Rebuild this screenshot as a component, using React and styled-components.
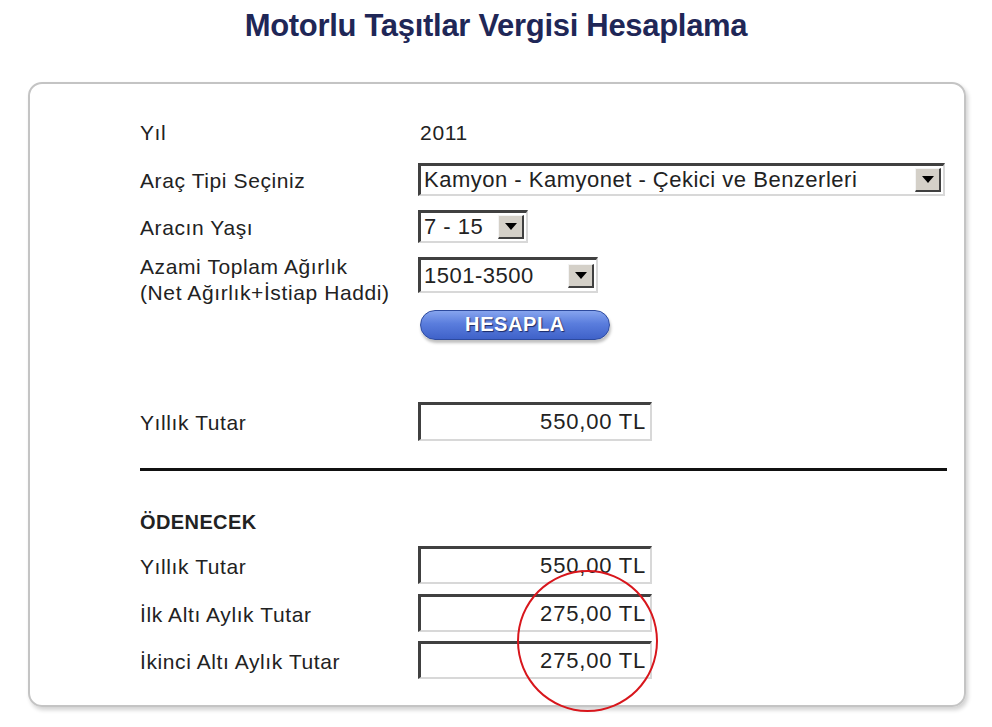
import React from "react"
import styled, { createGlobalStyle } from "styled-components"

const GlobalStyle = createGlobalStyle`
  body {
    margin: 0;
    background: #fff;
    font-family: "Liberation Sans", Arial, sans-serif;
  }
`

const Page = styled.div`
  width: 992px;
  height: 727px;
  overflow: hidden;
`

const Title = styled.h1`
  margin: 0;
  height: 82px;
  padding-top: 8px;
  box-sizing: border-box;
  text-align: center;
  font-size: 31px;
  font-weight: bold;
  color: #1f2757;
  letter-spacing: -0.3px;
`

const Panel = styled.div`
  position: relative;
  margin-left: 28px;
  width: 938px;
  height: 625px;
  box-sizing: border-box;
  border: 2px solid #c4c4c4;
  border-radius: 14px;
  box-shadow: 2px 3px 4px rgba(0, 0, 0, 0.18);
  padding: 31px 17px 0 110px;
  display: flex;
  flex-direction: column;
  color: #222;
  font-size: 21px;
  letter-spacing: 0.7px;
`

const Row = styled.div`
  display: grid;
  grid-template-columns: 278px 1fr;
  align-items: ${p => p.$align || "center"};
  min-height: ${p => p.$h || 33}px;
  margin-top: ${p => p.$mt || 0}px;
`

const Label = styled.div`
  line-height: 26px;
  padding-top: 3px;
  margin-top: ${p => p.$shift || 0}px;
  font-weight: ${p => (p.$bold ? "bold" : "normal")};
  font-size: ${p => (p.$bold ? 20 : 21)}px;
  letter-spacing: ${p => (p.$bold ? 0.4 : 0.6)}px;
`

const Value = styled.div`
  padding-left: 2px;
  padding-top: 2px;
`

const SelectBox = styled.div`
  width: ${p => p.$w}px;
  height: ${p => p.$h || 33}px;
  box-sizing: border-box;
  display: flex;
  align-items: center;
  justify-content: space-between;
  border-style: solid;
  border-width: 3px 2px 2px 3px;
  border-color: #404040 #d8d8d8 #d8d8d8 #404040;
  background: #fff;
  padding: 0 2px 0 3px;
  font-size: 22px;
  letter-spacing: 0.5px;
`

const ArrowBtn = styled.div`
  width: 26px;
  height: 24px;
  box-sizing: border-box;
  background: #d4d0c8;
  border-style: solid;
  border-width: 1px 2px 2px 1px;
  border-color: #f4f4f4 #404040 #404040 #f4f4f4;
  display: flex;
  align-items: center;
  justify-content: center;
  &::after {
    content: "";
    border-left: 6px solid transparent;
    border-right: 6px solid transparent;
    border-top: 7px solid #000;
  }
`

const Select = ({ w, h, children }) => (
  <SelectBox $w={w} $h={h}>
    <span>{children}</span>
    <ArrowBtn />
  </SelectBox>
)

const Button = styled.button`
  width: 190px;
  height: 30px;
  margin-left: 2px;
  border: 1px solid #2d4a9e;
  border-radius: 15px;
  background: linear-gradient(#86a4ee 0%, #5a7ddd 45%, #3f62c9 100%);
  color: #fff;
  font-family: "Liberation Sans", Arial, sans-serif;
  font-size: 20px;
  font-weight: bold;
  letter-spacing: 0.6px;
  text-shadow: 1px 1px 1px #1b2a66;
  box-shadow: 1px 3px 3px rgba(0, 0, 0, 0.25);
  padding: 0;
`

const Amount = styled.div`
  width: 234px;
  height: ${p => p.$h || 39}px;
  box-sizing: border-box;
  border-style: solid;
  border-width: 3px 2px 2px 3px;
  border-color: #404040 #d8d8d8 #d8d8d8 #404040;
  text-align: right;
  padding-right: 4px;
  font-size: 22px;
  letter-spacing: 0.8px;
  line-height: ${p => (p.$h || 39) - 5}px;
`

const Divider = styled.hr`
  margin: 27px 0 0 0;
  border: none;
  border-top: 3px solid #111;
`

const Circle = styled.div`
  position: absolute;
  left: 487px;
  top: 486px;
  width: 137px;
  height: 138px;
  border: 2.5px solid #d8161c;
  border-radius: 50%;
`

export default function App() {
  return (
    <Page>
      <GlobalStyle />
      <Title>Motorlu Taşıtlar Vergisi Hesaplama</Title>
      <Panel>
        <Row>
          <Label>Yıl</Label>
          <Value>2011</Value>
        </Row>
        <Row $mt={15}>
          <Label>Araç Tipi Seçiniz</Label>
          <Select w={527}>Kamyon - Kamyonet - Çekici ve Benzerleri</Select>
        </Row>
        <Row $mt={14}>
          <Label>Aracın Yaşı</Label>
          <Select w={110}>7 - 15</Select>
        </Row>
        <Row $mt={14} $align="start" $h={36}>
          <Label $shift={-6}>
            Azami Toplam Ağırlık
            <br />
            (Net Ağırlık+İstiap Haddi)
          </Label>
          <Select w={180} h={36}>1501-3500</Select>
        </Row>
        <Row $mt={2}>
          <Label />
          <Button>HESAPLA</Button>
        </Row>
        <Row $mt={61} $h={39}>
          <Label>Yıllık Tutar</Label>
          <Amount>550,00 TL</Amount>
        </Row>
        <Divider />
        <Row $mt={33}>
          <Label $bold>ÖDENECEK</Label>
        </Row>
        <Row $mt={9} $h={38}>
          <Label>Yıllık Tutar</Label>
          <Amount $h={38}>550,00 TL</Amount>
        </Row>
        <Row $mt={10} $h={38}>
          <Label>İlk Altı Aylık Tutar</Label>
          <Amount $h={38}>275,00 TL</Amount>
        </Row>
        <Row $mt={9} $h={38}>
          <Label>İkinci Altı Aylık Tutar</Label>
          <Amount $h={38}>275,00 TL</Amount>
        </Row>
        <Circle />
      </Panel>
    </Page>
  )
}
